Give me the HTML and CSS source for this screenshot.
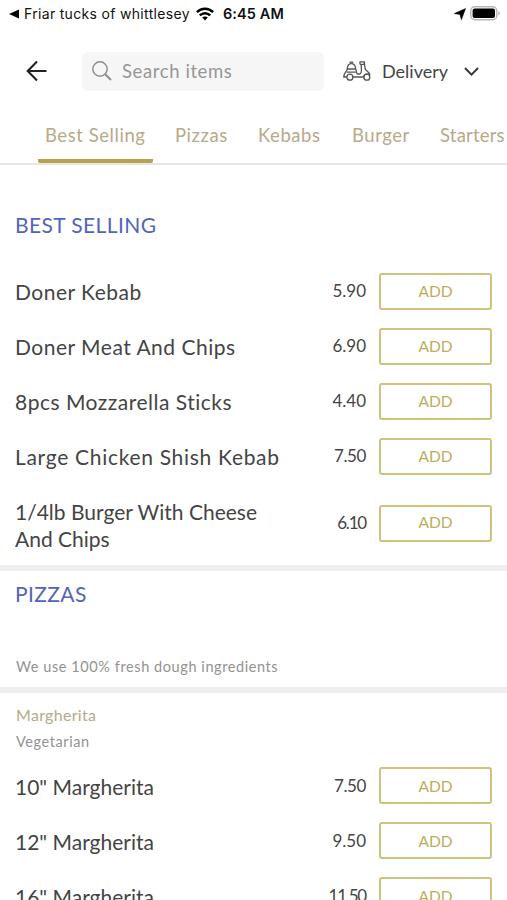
FILE: index.html
```
<!DOCTYPE html>
<html lang="en">
<head>
    <meta charset="UTF-8">
    <meta name="viewport" content="width=device-width, initial-scale=1.0">
    <title>Menu</title>
    <link rel="stylesheet" href="styles.css">
</head>
<body>
    <!-- Status bar -->
    <div class="status-bar">
        <svg class="back-app" width="10" height="10" viewBox="0 0 10 10"><path d="M0 5L10 0.5V9.5Z"/></svg>
        <span class="app-name">Friar tucks of whittlesey</span>
        <svg class="wifi" width="18" height="14" viewBox="0 0 18 14" fill="none" stroke="#000" stroke-width="2.5">
            <path d="M0.9 5.2C5.4 0.5 12.6 0.5 17.1 5.2"/>
            <path d="M3.8 8.3C6.8 5.4 11.2 5.4 14.2 8.3"/>
            <path d="M6.2 10.5C7.8 9 10.2 9 11.8 10.5L9 13.4Z" fill="#000" stroke="none"/>
        </svg>
        <span class="time">6:45 AM</span>
        <svg class="location" width="12" height="12" viewBox="0 0 12 12"><path d="M11.6 0.4L7.4 11.8L5.9 6.4L0.2 5.6Z" stroke="#000" stroke-width="0.5"/></svg>
        <svg class="battery" width="31" height="15" viewBox="0 0 31 15">
            <rect x="0.8" y="0.8" width="26" height="13" rx="4" fill="#fff" stroke="#b5b5b5" stroke-width="1.4"/>
            <rect x="2.6" y="2.6" width="22.4" height="9.4" rx="2"/>
            <path d="M28.4 5V9.6C30.4 8.8 30.4 5.8 28.4 5Z" fill="#b5b5b5"/>
        </svg>
    </div>

    <!-- Header -->
    <div class="header">
        <svg class="back-arrow" width="22" height="22" viewBox="0 0 22 22" fill="none" stroke="#222" stroke-width="2.1">
            <path d="M20.5 11H2M11 1.5L1.7 11L11 20.5"/>
        </svg>
        <div class="search-box">
            <svg width="20" height="20" viewBox="0 0 20 20" fill="none" stroke="#8e8e8e" stroke-width="1.5">
                <circle cx="8" cy="8" r="7.2"/>
                <path d="M13.2 13.2L19 19" stroke-width="2"/>
            </svg>
            <span>Search items</span>
        </div>
        <div class="delivery">
            <svg class="scooter" width="28" height="20" viewBox="0 0 28 20" fill="none" stroke="#555" stroke-width="1.3" stroke-linejoin="round">
                <path d="M4.3 8C4.3 4.5 5.8 2.6 8.3 2.6S12.6 4.5 12.6 8Z"/>
                <path d="M7.2 2.5V1.2H9.6V2.5"/>
                <path d="M4.3 8C4 10.5 0.8 11.5 0.7 16H3.9M9.9 16H20.8C21 13.5 23 12.5 26.8 13.5C26 11 23 10 22.2 8L21.3 1.8"/>
                <path d="M12.6 8C14 10 13.2 13 14.5 13H17C19.5 11.3 18 7 18.3 4.2L17 2.9V0.8H21.5L21.3 3.4H18.4M3.5 11.2H13.5"/>
                <circle cx="6.9" cy="16.2" r="3"/>
                <circle cx="23.8" cy="16.2" r="3"/>
            </svg>
            <span>Delivery</span>
            <svg class="chevron" width="15" height="9" viewBox="0 0 15 9" fill="none" stroke="#333" stroke-width="1.9"><path d="M1 1L7.5 7.6L14 1"/></svg>
        </div>
    </div>

    <!-- Category tabs -->
    <div class="tabs">
        <div class="tab active">Best Selling</div>
        <div class="tab pizzas">Pizzas</div>
        <div class="tab kebabs">Kebabs</div>
        <div class="tab burger">Burger</div>
        <div class="tab starters">Starters</div>
    </div>

    <!-- Best selling -->
    <div class="section best-selling">
        <h2>BEST SELLING</h2>
        <div class="item">
            <div class="item-name">Doner Kebab</div>
            <div class="price">5.90</div>
            <button class="add-button">ADD</button>
        </div>
        <div class="item">
            <div class="item-name">Doner Meat And Chips</div>
            <div class="price">6.90</div>
            <button class="add-button">ADD</button>
        </div>
        <div class="item">
            <div class="item-name">8pcs Mozzarella Sticks</div>
            <div class="price">4.40</div>
            <button class="add-button">ADD</button>
        </div>
        <div class="item">
            <div class="item-name wide">Large Chicken Shish Kebab</div>
            <div class="price tight">7.50</div>
            <button class="add-button">ADD</button>
        </div>
        <div class="item">
            <div class="item-name tight">1/4lb Burger With Cheese And Chips</div>
            <div class="price tighter">6.10</div>
            <button class="add-button">ADD</button>
        </div>
    </div>

    <!-- Pizzas -->
    <div class="section pizza-intro">
        <h2>PIZZAS</h2>
        <p class="description">We use 100% fresh dough ingredients</p>
    </div>

    <div class="section pizza-list">
        <h3>Margherita</h3>
        <p class="description">Vegetarian</p>
        <div class="item">
            <div class="item-name tight">10" Margherita</div>
            <div class="price tight">7.50</div>
            <button class="add-button">ADD</button>
        </div>
        <div class="item">
            <div class="item-name tight">12" Margherita</div>
            <div class="price">9.50</div>
            <button class="add-button">ADD</button>
        </div>
        <div class="item">
            <div class="item-name tight">16" Margherita</div>
            <div class="price tighter">11.50</div>
            <button class="add-button">ADD</button>
        </div>
    </div>
</body>
</html>
```
FILE: styles.css
```
* {
    box-sizing: border-box;
}

body {
    font-family: Lato, sans-serif;
    background-color: #fff;
    color: #444;
    margin: 0;
    height: 900px;
    overflow: hidden;
}

svg {
    display: block;
    flex-shrink: 0;
}

.status-bar {
    display: flex;
    align-items: center;
    height: 27px;
    padding: 0 6px 0 9px;
    font-family: Inter, sans-serif;
    color: #111;
}

.app-name {
    margin-left: 5px;
    width: 166px;
    font-size: 14px;
    letter-spacing: 0.32px;
    white-space: nowrap;
}

.wifi {
    margin-left: 6px;
}

.time {
    margin-left: 9px;
    font-size: 14.5px;
    font-weight: 600;
    letter-spacing: 0.1px;
}

.location {
    margin-left: auto;
}

.battery {
    margin-left: 4px;
}

.header {
    display: flex;
    align-items: center;
    height: 88px;
    padding-left: 26px;
}

.search-box {
    display: flex;
    align-items: center;
    gap: 10px;
    width: 242px;
    height: 39px;
    margin-left: 34px;
    padding-left: 10px;
    border-radius: 6px;
    background-color: #f6f6f6;
    color: #969696;
    font-size: 18.5px;
    letter-spacing: 0.6px;
}

.delivery {
    display: flex;
    align-items: center;
    margin-left: 19px;
    font-size: 18px;
}

.delivery span {
    width: 67px;
    margin-left: 11px;
}

.chevron {
    margin-left: 15px;
}

.tabs {
    display: flex;
    height: 50px;
    padding-left: 38px;
    border-bottom: 2px solid #e6e6e6;
    color: #b8a988;
    font-size: 18.5px;
    letter-spacing: 0.55px;
    white-space: nowrap;
}

.tab {
    height: 48px;
    padding-top: 9px;
    flex-shrink: 0;
}

.active {
    width: 115px;
    padding-left: 7px;
    border-bottom: 4px solid #b5a44d;
    border-radius: 2px;
}

.pizzas {
    width: 105px;
    padding-left: 22px;
}

.kebabs {
    width: 94px;
}

.burger {
    width: 88px;
}

.starters {
    letter-spacing: 0.2px;
}

.section {
    padding: 0 15px;
}

h2 {
    margin: 0;
    color: #5265b8;
    font-size: 21px;
    font-weight: normal;
    line-height: 27px;
    letter-spacing: 0.4px;
}

.best-selling {
    height: 406px;
    padding-top: 46px;
    border-bottom: 6px solid #eee;
}

.best-selling h2 {
    margin-bottom: 26px;
}

.item {
    display: flex;
    align-items: center;
    min-height: 55px;
}

.item-name {
    width: 280px;
    padding: 14px 0 10px;
    align-self: flex-start;
    font-size: 21px;
    line-height: 27px;
    letter-spacing: 0.5px;
}

.item-name.tight {
    letter-spacing: 0;
}

.item-name.wide {
    letter-spacing: 0.7px;
}

.price {
    flex: 1;
    margin-right: 13px;
    padding-bottom: 2px;
    font-size: 17px;
    text-align: right;
}

.price.tight {
    letter-spacing: -0.4px;
}

.price.tighter {
    letter-spacing: -1.2px;
}

.add-button {
    width: 113px;
    height: 37px;
    padding: 0 0 2px;
    border: 2px solid #d0c17f;
    border-radius: 3px;
    background-color: #fff;
    color: #bdad59;
    font-family: inherit;
    font-size: 15.5px;
}

.pizza-intro {
    height: 122px;
    padding-top: 9px;
    border-bottom: 6px solid #eee;
}

.description {
    margin: 0 0 0 1px;
    color: #929292;
    font-size: 14.5px;
    line-height: 20px;
    letter-spacing: 0.58px;
}

.pizza-intro .description {
    margin-top: 50px;
}

h3 {
    margin: 0 0 0 1px;
    padding-top: 12px;
    color: #b8a988;
    font-size: 16px;
    font-weight: normal;
    line-height: 20px;
    letter-spacing: 0.3px;
}

.pizza-list .description {
    margin: 7px 0 6px 1px;
}

.pizza-list .item-name {
    padding-top: 15px;
    padding-bottom: 9px;
}

.pizza-list .price,
.pizza-list .add-button {
    padding-bottom: 0;
}
```
